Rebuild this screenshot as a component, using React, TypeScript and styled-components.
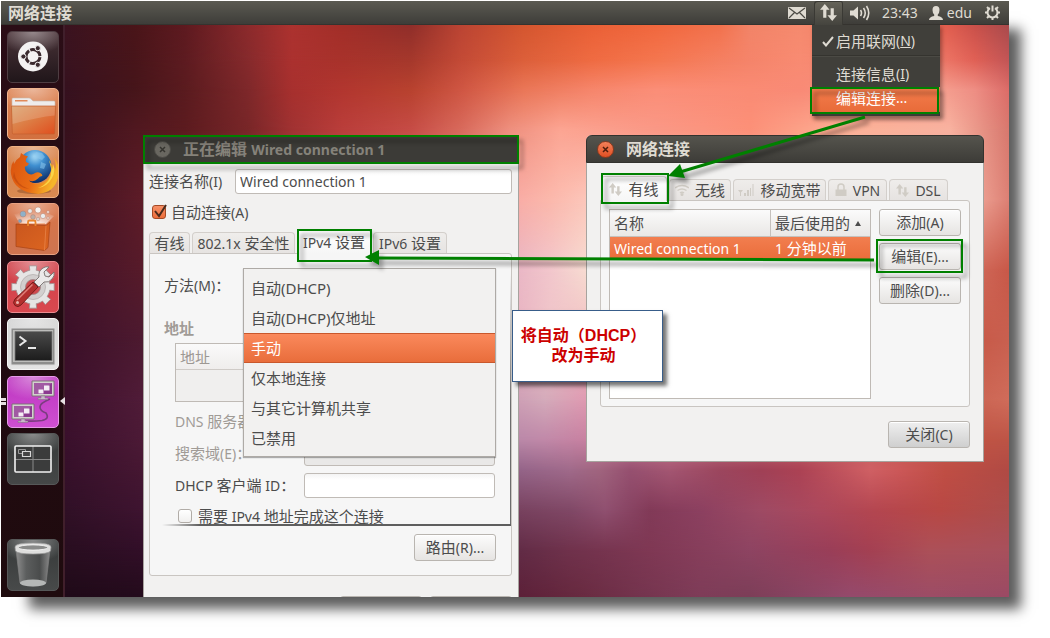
import React, { useState } from "react";
import styled, { createGlobalStyle, css } from "styled-components";

const LATIN = `"Noto Sans", "Open Sans", "Noto Sans CJK SC", sans-serif`;
const INK = "#4c4c4c";
const GREEN = "#008000";

const GlobalStyle = createGlobalStyle`
  * { box-sizing: border-box; }
  body {
    margin: 0;
    background: #fff;
    font: 15px/20px ${LATIN};
    color: ${INK};
  }
  button, input, select { font: inherit; color: inherit; }
`;

/* ---------- desktop shell ---------- */

const Page = styled.div`
  min-height: 100vh;
  padding: 1px 41px 41px 1px;
  display: flex;
`;

const Desktop = styled.main`
  flex: 1;
  display: flex;
  flex-direction: column;
  min-width: 0;
  box-shadow: 20px 20px 12px -8px rgba(0, 0, 0, 0.64);
`;

const Panel = styled.header`
  height: 24px;
  flex: none;
  display: flex;
  align-items: center;
  justify-content: space-between;
  padding: 0 2px 0 7px;
  color: #dfdbd2;
  background: linear-gradient(#5b5a52, #3e3d39);
  border-bottom: 1px solid #35332f;
`;

const AppTitle = styled.h1`
  margin: 0;
  font-size: 16px;
  line-height: 20px;
  font-weight: 700;
`;

const Tray = styled.div`
  display: flex;
  align-items: stretch;
  height: 24px;
`;

const TrayItem = styled.button<{ $open?: boolean; $pad?: number }>`
  border: 0;
  padding: 0 ${(p) => p.$pad ?? 6}px;
  display: flex;
  align-items: center;
  gap: 4px;
  background: none;
  font-size: 14px;
  ${(p) =>
    p.$open &&
    css`
      background: linear-gradient(#66645a, #45443e);
      box-shadow: inset 1px 1px 0 #3a3934, inset -1px 0 0 #3a3934;
      border-radius: 3px 3px 0 0;
    `}
  svg { display: block; }
`;

const Workspace = styled.div`
  flex: 1;
  display: flex;
  min-height: 0;
`;

const Launcher = styled.nav`
  flex: none;
  width: 64px;
  padding: 6px 6px;
  display: flex;
  flex-direction: column;
  justify-content: space-between;
  background: linear-gradient(#2b0d16, #210a11 50%, #1f0b0e);
  border-right: 2px solid #401f2b;
`;

const LauncherGroup = styled.div`
  height: 454px;
  display: flex;
  flex-direction: column;
  justify-content: space-between;
`;

const Tile = styled.button<{ $bg: string; $edge: string }>`
  position: relative;
  width: 52px;
  height: 52px;
  padding: 0;
  border: 1px solid ${(p) => p.$edge};
  border-radius: 5px;
  background: radial-gradient(ellipse 70% 45% at 50% 0, rgba(255, 255, 255, 0.42), rgba(255, 255, 255, 0)), ${(p) => p.$bg};
  > svg { display: block; width: 50px; height: 50px; }
`;

const Running = styled.span`
  position: absolute;
  left: -7px;
  top: 21px;
  width: 5px;
  height: 7px;
  border: solid #e6dfe2;
  border-width: 3px 0;
`;

const Focused = styled.span`
  position: absolute;
  right: -7px;
  top: 20px;
  border: 4px solid transparent;
  border-left-width: 0;
  border-right: 5px solid #e6dfe2;
`;

const Canvas = styled.div`
  position: relative;
  flex: 1;
  min-width: 0;
  overflow: hidden;
`;

const Backdrop = styled.svg`
  position: absolute;
  inset: 0;
  width: 100%;
  height: 100%;
`;

/* ---------- windows ---------- */

const Win = styled.section<{ $x: number; $y: number; $w: number }>`
  position: absolute;
  left: ${(p) => p.$x}px;
  top: ${(p) => p.$y}px;
  width: ${(p) => p.$w}px;
  background: #f2f1f0;
  border: 1px solid #a7a39e;
  border-top: 0;
  border-radius: 6px 6px 0 0;
`;

const TitleBar = styled.div<{ $active?: boolean }>`
  height: 28px;
  margin: 0 -1px;
  padding: 0 10px;
  display: flex;
  align-items: center;
  gap: 12px;
  border-radius: 6px 6px 0 0;
  border: 1px solid #33322e;
  background: ${(p) => (p.$active ? "linear-gradient(#55544d, #3d3c38)" : "#3c3b37")};
  color: ${(p) => (p.$active ? "#dfdbd2" : "#85827a")};
`;

const WinTitle = styled.h2`
  margin: 0;
  font-size: 16px;
  line-height: 20px;
  font-weight: 700;
`;

const Small = styled.span`
  font-size: 14px;
`;

const CloseDot = styled.button<{ $active?: boolean }>`
  width: 17px;
  height: 17px;
  padding: 0;
  border-radius: 50%;
  border: 1px solid ${(p) => (p.$active ? "#8c3a1e" : "#4b4a45")};
  background: ${(p) => (p.$active ? "linear-gradient(#f4815a, #df4f23)" : "#696760")};
  color: ${(p) => (p.$active ? "#4e1d0c" : "#35342f")};
  svg { display: block; margin: auto; }
`;

const TabStrip = styled.div<{ $indent?: number }>`
  display: flex;
  align-items: flex-end;
  gap: 2px;
  height: 24px;
  padding-left: ${(p) => p.$indent ?? 0}px;
`;

const Tab = styled.button<{ $on?: boolean; $w: number }>`
  width: ${(p) => p.$w}px;
  flex: none;
  height: ${(p) => (p.$on ? 25 : 21)}px;
  margin-bottom: ${(p) => (p.$on ? -1 : 0)}px;
  padding: 0;
  display: flex;
  align-items: center;
  justify-content: center;
  gap: 6px;
  white-space: nowrap;
  border: 1px solid #d3cfcb;
  border-bottom: 0;
  border-radius: 4px 4px 0 0;
  background: ${(p) => (p.$on ? "linear-gradient(#fff, #f6f6f6)" : "linear-gradient(#efedeb, #e6e3e1)")};
  svg { flex: none; }
`;

const Button = styled.button<{ $dark?: boolean }>`
  width: 82px;
  height: 27px;
  padding: 0;
  border: 1px solid #b9b5b0;
  border-radius: 3px;
  background: ${(p) => (p.$dark ? "linear-gradient(#efefef, #cfcfcf)" : "linear-gradient(#fcfcfc, #e6e4e2)")};
  box-shadow: inset 0 1px 0 #fff;
`;

const Field = styled.input`
  height: 25px;
  min-width: 0;
  padding: 0 4px;
  font-size: 14px;
  border: 1px solid #c0bbb6;
  border-radius: 3px;
  background: linear-gradient(#f4f4f4, #fff 6px);
  &:disabled { background: #e9e8e7; }
`;

const Check = styled.input`
  appearance: none;
  width: 14px;
  height: 14px;
  margin: 0;
  flex: none;
  border: 1px solid #b1aca7;
  border-radius: 3px;
  background: linear-gradient(#fff, #f1f0ef);
  &:checked {
    border-color: #a54a25;
    background: linear-gradient(#f68f66, #ec6e3b);
  }
`;

const CheckMark = styled.svg`
  position: absolute;
  left: 1px;
  top: 1px;
  pointer-events: none;
`;

const CheckRow = styled.label<{ $indent?: number; $gap?: number }>`
  position: relative;
  display: flex;
  align-items: center;
  height: 20px;
  margin-top: 8px;
  padding-left: ${(p) => p.$indent ?? 0}px;
  ${Check} { margin-right: ${(p) => p.$gap ?? 5}px; }
`;

const EditBody = styled.form`
  padding: 6px 6px 0 5px;
`;

const NameRow = styled.div`
  display: flex;
  align-items: center;
  label { width: 86px; }
  ${Field} { flex: 1; }
`;

const EditTabs = styled.div`
  margin-top: 7px;
`;

const TabPanel = styled.div`
  border: 1px solid #c9c5c1;
  border-radius: 0 3px 3px 3px;
  background: #f6f6f6;
`;

const Sheet = styled.div`
  position: relative;
  display: flex;
  flex-direction: column;
  height: 272px;
  padding: 21px 16px 0 14px;
  background:
    linear-gradient(to right, rgba(90, 90, 90, 0) 12px, #5e5e5e 50px) bottom / 100% 2px no-repeat,
    linear-gradient(rgba(90, 90, 90, 0) 20px, #6c6c6c 150px) right / 1px 100% no-repeat;
`;

const FormLabel = styled.label`
  height: 20px;
`;

const GroupTitle = styled.h3`
  margin: 23px 0 5px;
  font-size: 15px;
  line-height: 20px;
  font-weight: 700;
  color: #a09b96;
`;

const Addresses = styled.table`
  margin-left: 11px;
  height: 63px;
  border: 1px solid #bfbab5;
  border-spacing: 0;
  background: #f0efee;
  color: #9d9893;
  th {
    height: 26px;
    padding: 0 4px;
    text-align: left;
    font-weight: 400;
    background: linear-gradient(#fafafa, #efedec);
    border-bottom: 1px solid #cfcbc7;
  }
`;

const FieldRow = styled.div<{ $off?: boolean }>`
  margin: 7px 0 0 11px;
  display: flex;
  align-items: center;
  color: ${(p) => (p.$off ? "#a09b96" : INK)};
  label { width: 129px; white-space: nowrap; }
  ${Field} { flex: 1; }
`;

const MethodList = styled.select`
  position: absolute;
  left: 93px;
  top: 14px;
  width: 253px;
  height: 189px;
  padding: 4px 0;
  overflow: hidden;
  border: 1px solid #aeaaa6;
  border-radius: 0;
  outline: 0;
  background: #f2f1f0;
  box-shadow: 0 1px 1px rgba(0, 0, 0, 0.3);
  option {
    min-height: 30px;
    padding: 4px 7px 5px;
    color: ${INK};
  }
  option:checked {
    color: #fff;
    background: linear-gradient(#fb8a5d, #e86c3a);
    box-shadow: inset 0 1px 0 #c9582c, inset 0 -1px 0 #c9582c;
  }
`;

const RouteRow = styled.div`
  display: flex;
  justify-content: flex-end;
  padding: 8px 15px 14px;
`;

const Footer = styled.div`
  display: flex;
  justify-content: flex-end;
  gap: 8px;
  padding: 20px 0 9px;
`;

const ListBody = styled.div`
  padding: 13px 13px;
`;

const ListPanel = styled(TabPanel)`
  display: flex;
  gap: 8px;
  padding: 8px 8px 7px 8px;
`;

const ListFrame = styled.div`
  flex: 1;
  height: 190px;
  border: 1px solid #bfbab5;
  background: #fff;
`;

const Connections = styled.table`
  width: 100%;
  table-layout: fixed;
  border-spacing: 0;
  th, td {
    padding: 0 4px;
    text-align: left;
    font-weight: 400;
    white-space: nowrap;
  }
  th {
    height: 27px;
    background: linear-gradient(#fbfbfb, #e9e7e5);
    border-bottom: 1px solid #c5c1bd;
  }
  th + th { width: 100px; border-left: 1px solid #c5c1bd; }
  td {
    height: 22px;
    color: #fff;
    background: linear-gradient(#f27e4f, #ea6d3b);
  }
  td + td { padding-left: 5px; }
`;

const SortMark = styled.span`
  display: inline-block;
  margin: 0 0 3px 5px;
  border: 3px solid transparent;
  border-top: 0;
  border-bottom: 5px solid #4c4c4c;
`;

const Actions = styled.div`
  display: flex;
  flex-direction: column;
  gap: 7px;
`;

const CloseRow = styled.div`
  display: flex;
  justify-content: flex-end;
  padding-top: 14px;
`;

/* ---------- indicator menu, notes ---------- */

const Menu = styled.div`
  position: absolute;
  left: 747px;
  top: -1px;
  width: 128px;
  padding: 4px 0 4px;
  background: #403f3a;
  color: #dfdbd2;
  box-shadow: 2px 3px 4px rgba(0, 0, 0, 0.35);
`;

const MenuItem = styled.button<{ $hot?: boolean }>`
  width: 100%;
  height: ${(p) => (p.$hot ? 25 : 26)}px;
  padding: 0 0 ${(p) => (p.$hot ? 3 : 0)}px 7px;
  display: flex;
  align-items: center;
  border: 0;
  background: ${(p) => (p.$hot ? "linear-gradient(#f47d4d, #e86b39)" : "none")};
  color: ${(p) => (p.$hot ? "#fff" : "inherit")};
  white-space: nowrap;
`;

const MenuMark = styled.span`
  width: 17px;
  flex: none;
`;

const MenuRule = styled.hr`
  margin: 1px 0 4px;
  border: 0;
  border-top: 1px solid #35342f;
  border-bottom: 1px solid #4b4a44;
`;

const Note = styled.aside`
  position: absolute;
  left: 447px;
  top: 285px;
  width: 151px;
  height: 72px;
  padding: 15px 8px 0 0;
  border: 1px solid #385d8a;
  background: #fff;
  box-shadow: 4px 4px 4px rgba(0, 0, 0, 0.55);
  color: #cc0000;
  font: 700 16px/20px "Liberation Sans", "Noto Sans CJK SC", sans-serif;
  text-align: center;
  white-space: nowrap;
`;

const Marks = styled.svg`
  position: absolute;
  left: 0;
  top: 0;
  pointer-events: none;
  overflow: visible;
  filter: drop-shadow(4px 5px 2px rgba(0, 0, 0, 0.4));
`;

/* Mixed captions: Han characters at body size, Latin runs one step smaller. */
const Mixed = ({ text }: { text: string }) => (
  <span>
    {text.split(/([\x20-\x7e]+)/).map((part, i) => (i % 2 ? <Small key={i}>{part}</Small> : part))}
  </span>
);

/* ---------- wallpaper: rows of horizontal colour stops, blended downwards ---------- */

type Row = { y: number; stops: [number, string][] };

const ROWS: Row[] = [
  { y: 24, stops: [[65, "#3b1320"], [135, "#4a1519"], [185, "#5e1a20"], [248, "#8c2a2c"], [292, "#ac322f"], [342, "#a22e28"], [411, "#8f2e2a"], [461, "#bb4433"], [524, "#d4562f"], [593, "#ea6036"], [656, "#f1673d"], [720, "#f2714c"], [750, "#f28468"], [800, "#f58a6e"], [940, "#e8604e"], [975, "#c9504a"], [1009, "#a84a4c"]] },
  { y: 60, stops: [[65, "#39131f"], [135, "#48151a"], [185, "#5d1b20"], [248, "#862a2c"], [292, "#ab312f"], [342, "#a8322b"], [411, "#a5382c"], [461, "#c34a36"], [524, "#dc5f3a"], [593, "#ef6b42"], [656, "#f4764f"], [750, "#f5846a"], [800, "#f88b72"], [940, "#ee7868"], [975, "#e06055"], [1009, "#c25556"]] },
  { y: 90, stops: [[65, "#36111f"], [135, "#46151a"], [185, "#5a1b1f"], [248, "#7e282a"], [292, "#a7302e"], [342, "#b2362f"], [411, "#b8422f"], [461, "#cf5643"], [524, "#ea7758"], [593, "#f6866c"], [656, "#fb8e78"], [750, "#fa8b74"], [800, "#f98a76"], [940, "#f6a090"], [975, "#ee8e84"], [1009, "#dc6c68"]] },
  { y: 130, stops: [[65, "#38111d"], [135, "#501820"], [185, "#5c1b1f"], [248, "#782628"], [292, "#a03232"], [342, "#ba3e3b"], [411, "#c64c46"], [461, "#d86a5c"], [510, "#ee907f"], [560, "#fca593"], [656, "#fa9886"], [750, "#fc9078"], [850, "#fcb298"], [950, "#f8b2a0"], [1009, "#d8786e"]] },
  { y: 200, stops: [[65, "#3c1220"], [143, "#5e1c28"], [510, "#f8aaa4"], [550, "#fbb8ac"], [590, "#fcc8bc"], [980, "#eda092"], [1009, "#dc8074"]] },
  { y: 270, stops: [[65, "#401228"], [143, "#571b2a"], [510, "#e8b4c4"], [550, "#f2c6cc"], [590, "#f8ded2"], [980, "#d06858"], [1009, "#c85848"]] },
  { y: 340, stops: [[65, "#3b1028"], [143, "#4d1a30"], [510, "#e8b0c0"], [550, "#eec4c8"], [590, "#f0bcc0"], [980, "#c85a48"], [1009, "#c86050"]] },
  { y: 400, stops: [[65, "#3c102c"], [143, "#501c38"], [510, "#cc9cb4"], [545, "#d4aaba"], [590, "#e098b0"], [980, "#cc6654"], [1009, "#d06c5a"]] },
  { y: 440, stops: [[65, "#3a102c"], [143, "#4c1a36"], [510, "#b888a8"], [545, "#c088a8"], [590, "#c880a0"], [980, "#c05444"], [1009, "#bc5446"]] },
  { y: 470, stops: [[65, "#36102a"], [143, "#461732"], [520, "#946488"], [570, "#a06a8a"], [600, "#a0647e"], [630, "#965070"], [670, "#a45672"], [720, "#9c465e"], [760, "#a04056"], [800, "#ac4254"], [870, "#d06064"], [900, "#cc5858"], [945, "#c04e44"], [1009, "#b04a44"]] },
  { y: 510, stops: [[65, "#301026"], [143, "#3e1430"], [520, "#78425f"], [570, "#804866"], [605, "#905070"], [650, "#823a58"], [700, "#8c4060"], [760, "#9e4a64"], [820, "#ac485c"], [875, "#b44650"], [940, "#b84844"], [1009, "#ac4e4c"]] },
  { y: 550, stops: [[65, "#290e20"], [143, "#320f28"], [520, "#622c46"], [570, "#70324c"], [650, "#7f3854"], [750, "#8e4462"], [830, "#9a3e58"], [870, "#a44052"], [930, "#ac5058"], [1009, "#a8505c"]] },
  { y: 597, stops: [[65, "#1f0a18"], [143, "#240b1c"], [520, "#5c2038"], [580, "#682a40"], [640, "#74344e"], [700, "#7e3c58"], [750, "#7c3e58"], [850, "#944a6c"], [930, "#9c4c66"], [1009, "#9a4a64"]] },
];

const Wallpaper = () => (
  <Backdrop viewBox="65 25 944 572" preserveAspectRatio="none" aria-hidden="true">
    <defs>
      <linearGradient id="fade" x1="0" y1="0" x2="0" y2="1">
        <stop offset="0" stopColor="#000" />
        <stop offset="1" stopColor="#fff" />
      </linearGradient>
      <mask id="down" maskContentUnits="objectBoundingBox" x="0" y="0" width="1" height="1">
        <rect width="1" height="1" fill="url(#fade)" />
      </mask>
      {ROWS.map((r, i) => (
        <linearGradient key={i} id={`row${i}`} gradientUnits="userSpaceOnUse" x1="65" y1="0" x2="1009" y2="0">
          {r.stops.map(([x, c]) => (
            <stop key={x} offset={(x - 65) / 944} stopColor={c} />
          ))}
        </linearGradient>
      ))}
    </defs>
    {ROWS.slice(0, -1).map((r, i) => {
      const h = ROWS[i + 1].y - r.y;
      return (
        <g key={i} shapeRendering="crispEdges">
          <rect x="65" y={r.y} width="944" height={h} fill={`url(#row${i})`} />
          <rect x="65" y={r.y} width="944" height={h} fill={`url(#row${i + 1})`} mask="url(#down)" />
        </g>
      );
    })}
  </Backdrop>
);

/* ---------- launcher drawings ---------- */

const DashIcon = () => (
  <svg viewBox="0 0 50 50">
    <circle cx="25" cy="24.5" r="15" fill="#f4f2f2" />
    <circle cx="25" cy="24.5" r="7" fill="none" stroke="#3b2a2e" strokeWidth="3" strokeDasharray="13.4 1.26" strokeDashoffset="-.63" />
    {[180, 300, 60].map((a) => (
      <circle key={a} cx={25 + 9.6 * Math.cos((a * Math.PI) / 180)} cy={24.5 + 9.6 * Math.sin((a * Math.PI) / 180)} r="2.6" fill="#3b2a2e" stroke="#f4f2f2" strokeWidth="1" />
    ))}
  </svg>
);

const FolderIcon = () => (
  <svg viewBox="0 0 50 50">
    <defs>
      <linearGradient id="fold" x1="0" y1="0" x2="1" y2="1">
        <stop offset="0" stopColor="#d9a06a" />
        <stop offset=".5" stopColor="#dd7a42" />
        <stop offset="1" stopColor="#e04e1e" />
      </linearGradient>
    </defs>
    <path d="M4 10q0-1 1-1h16q1 0 2 1l2 2h21q1 0 1 1v6H4z" fill="#eeeceb" stroke="#c8b8ac" strokeWidth=".6" />
    <path d="M7 11h12.500v1.500H7z" fill="#e08a5a" />
    <path d="M3.500 17h44l-.8 27q0 1-1 1H5.300q-1 0-1-1z" fill="url(#fold)" stroke="#c4602e" strokeWidth=".7" />
    <path d="M4 17.500h43l-.3 9Q30 28 4.500 35z" fill="#fff" opacity=".16" />
  </svg>
);

const FirefoxIcon = () => (
  <svg viewBox="0 0 50 50">
    <defs>
      <radialGradient id="globe" cx=".5" cy=".2" r=".8">
        <stop offset="0" stopColor="#a8dcf6" />
        <stop offset=".35" stopColor="#3f8fd0" />
        <stop offset="1" stopColor="#0b2a66" />
      </radialGradient>
      <linearGradient id="fox" x1="0" y1="0" x2="1" y2=".3">
        <stop offset="0" stopColor="#d9520f" />
        <stop offset=".6" stopColor="#e96c14" />
        <stop offset="1" stopColor="#f6b52a" />
      </linearGradient>
    </defs>
    <ellipse cx="26" cy="44" rx="17" ry="3" fill="#6b3010" opacity=".35" />
    <circle cx="27" cy="19.500" r="16.500" fill="url(#globe)" />
    <path d="M28 5l6 1 3 4-3 3-5-2-4 1zM33 15l5 2-2 5-4-1z" fill="#8cc8ee" opacity=".55" />
    <path d="M12 10l1-4q3 3 7 3.500Q17 12 18 15l3 1.500q-1 2.500-4 3-1 4 3 7 4 2 7-.5 3-1.500 6 .500 2 1.500 1 2.500-2.500 0-4 2.500-4 4-9 2 4 4 11 3 9-2 11-12 1-4-.5-8 4 2 4.500 7 2-5-1-13 6 7 4.500 18-3 17-20 18.500Q6 45.500 3 27q-1-8 2.500-13l.5 3q2.500-5 6-7z" fill="url(#fox)" />
    <path d="M41 13q3 5 2.500 11 2-4 1.500-7 3 7-1 14-5 9-14 10 15-6 13-20-1-4-2-8z" fill="#fbd546" />
    <path d="M6 25q2 13 15 17-11-1-16-12z" fill="#b8430e" opacity=".55" />
  </svg>
);

const SoftwareIcon = () => (
  <svg viewBox="0 0 50 50">
    <defs>
      <linearGradient id="bag" x1="0" y1="0" x2="1" y2="1">
        <stop offset="0" stopColor="#c9561e" />
        <stop offset="1" stopColor="#dc6520" />
      </linearGradient>
      <radialGradient id="glow" cx=".5" cy="1" r=".9">
        <stop offset="0" stopColor="#fff" />
        <stop offset="1" stopColor="#fff" stopOpacity="0" />
      </radialGradient>
    </defs>
    <path d="M6 10L12 20H38L46 12 33 6 20 7z" fill="url(#glow)" />
    <g stroke="#b97d68" strokeWidth=".5">
      <circle cx="15" cy="10" r="3" fill="#8fb0c8" />
      <circle cx="22" cy="7" r="2.300" fill="#e8e8e8" />
      <circle cx="30" cy="6" r="3" fill="#f6f4f2" />
      <circle cx="35" cy="12" r="2.600" fill="#e9eef0" />
      <circle cx="25" cy="13" r="2.400" fill="#b9aea8" />
      <circle cx="12" cy="17" r="1.800" fill="#7fa0bc" />
      <circle cx="40" cy="8" r="1.500" fill="#f0ddd4" />
      <circle cx="40" cy="14" r="1.300" fill="#f0ddd4" />
      <circle cx="30" cy="15" r="1.800" fill="#d8d0cc" />
    </g>
    <path d="M8 20l30 1.500 4-3.500-2 25.500-3.500 3L8 42.500z" fill="url(#bag)" stroke="#a84214" strokeWidth=".7" />
    <path d="M38 21.500l-1.500 25M12 19.500h25" stroke="#f0935a" strokeWidth=".8" opacity=".7" />
    <path d="M20 22v-4q0-1.500 1.500-1.500h4.500q1.500 0 1.500 1.500v4" fill="none" stroke="#e8862e" strokeWidth="1.800" />
  </svg>
);

const gearPath = (n: number, cx: number, cy: number, r1: number, r2: number) => {
  const pts: string[] = [];
  for (let i = 0; i < n; i++) {
    const a = (i * 360) / n;
    for (const [d, r] of [[-17, r1], [-11, r1], [-10, r2], [10, r2], [11, r1], [17, r1]] as const) {
      const t = ((a + d) * Math.PI) / 180;
      pts.push(`${(cx + r * Math.cos(t)).toFixed(1)} ${(cy + r * Math.sin(t)).toFixed(1)}`);
    }
  }
  return `M${pts.join("L")}Z`;
};

const SettingsIcon = () => (
  <svg viewBox="0 0 50 50">
    <path d={gearPath(8, 25, 25, 17, 21.5)} fill="#e6e5e4" stroke="#a08f8f" strokeWidth=".8" />
    <circle cx="25" cy="25" r="12.500" fill="#d2cfce" stroke="#b5b0ae" strokeWidth=".8" />
    <circle cx="25" cy="25" r="7.500" fill="#cf4a4e" stroke="#9a8a8a" strokeWidth=".8" />
    <path d="M26 20l5-5q-1-6 4-9 3-2 6-1l-5 5 1 4 4 1 5-5q1 4-2 7-3 4-8 3l-5 5z" fill="#eceae9" stroke="#77706e" strokeWidth=".9" />
    <path d="M25 20l5 5L13 43q-3 3-6 .5T7 37z" fill="#b3302e" stroke="#701a18" strokeWidth=".9" />
    <path d="M24.500 22.500L9 38" stroke="#e0807a" strokeWidth="1.400" />
    <circle cx="9.500" cy="40.500" r="1.500" fill="#e8b4ac" />
  </svg>
);

const TerminalIcon = () => (
  <svg viewBox="0 0 50 50">
    <defs>
      <linearGradient id="term" x1="0" y1="0" x2="0" y2="1">
        <stop offset="0" stopColor="#4a4a4a" />
        <stop offset="1" stopColor="#1c1c1c" />
      </linearGradient>
    </defs>
    <path d="M3 9h44v37H3z" fill="#8d8d8c" stroke="#dcdcdc" strokeWidth="1" />
    <path d="M5 11h40v32H5z" fill="#bdbdbb" />
    <path d="M7 12.500h37v29H7z" fill="url(#term)" stroke="#777" strokeWidth=".8" />
    <path d="M11.500 17.500l6 4.500-6 4.500" fill="none" stroke="#e8e8e8" strokeWidth="2" />
    <path d="M20 29h8" stroke="#e8e8e8" strokeWidth="2" />
  </svg>
);

const Monitor = ({ x, y }: { x: number; y: number }) => (
  <g transform={`translate(${x} ${y})`}>
    <path d="M0 0h22v15H0z" fill="#d4d0cf" stroke="#77716f" strokeWidth=".9" />
    <path d="M2 2h18v11H2z" fill="#8a3a8e" />
    <path d="M2 2h18L6 13H2z" fill="#b070b0" opacity=".6" />
    <path d="M12 4.500h5.500v5H12zM6.500 8.500h5v4h-5z" fill="#fff" opacity=".9" />
    <path d="M9 15h4v2h3v1.500H6V17h3z" fill="#c8b8c8" stroke="#7d6a7d" strokeWidth=".5" />
  </g>
);

const NetworkIcon = () => (
  <svg viewBox="0 0 50 50">
    <path d="M42 22q-10 4-10 8t6 6q4 6-4 7.500-8 1-16 .5" fill="none" stroke="#7b3d80" strokeWidth="1.600" />
    <Monitor x={24} y={4} />
    <Monitor x={4} y={27} />
  </svg>
);

const WorkspacesIcon = () => (
  <svg viewBox="0 0 50 50">
    <path d="M7 12h36v26H7z" fill="#3b3c3c" />
    <path d="M25 12v26M7 25.500h36" stroke="#8a8a8a" strokeWidth="1" />
    <rect x="7" y="12" width="36" height="26" rx="1" fill="none" stroke="#f2f2f2" strokeWidth="1.600" />
    <path d="M10.500 15.500h7v4h-7z" fill="none" stroke="#999" strokeWidth="1" />
    <path d="M14.500 17.500h8v5h-8z" fill="#444" stroke="#d8d8d8" strokeWidth="1.200" />
  </svg>
);

const TrashIcon = () => (
  <svg viewBox="0 0 50 50">
    <defs>
      <linearGradient id="can" x1="0" y1="0" x2="1" y2="0">
        <stop offset="0" stopColor="#8e8e8e" />
        <stop offset=".3" stopColor="#5c5e5e" />
        <stop offset=".7" stopColor="#4a4c4c" />
        <stop offset="1" stopColor="#8a8a8a" />
      </linearGradient>
    </defs>
    <path d="M8 10l4 33q13 6 26 0l4-33z" fill="url(#can)" stroke="#808080" strokeWidth=".7" />
    <ellipse cx="25" cy="43" rx="13" ry="3.500" fill="#b5b7b6" />
    <path d="M7 7q0-4 18-4t18 4l-.5 4Q40 14 25 14T7.500 11z" fill="#dededd" stroke="#9b9b9b" strokeWidth=".7" />
    <ellipse cx="25" cy="7.500" rx="15" ry="2.600" fill="#8a8b8a" stroke="#f8f8f8" strokeWidth=".8" />
  </svg>
);

const TILES = [
  { name: "Dash", bg: "linear-gradient(#4a3338, #20161a)", edge: "#4e3d42", icon: <DashIcon /> },
  { name: "Home Folder", bg: "linear-gradient(#dd8454, #d2703f)", edge: "#f0b48e", icon: <FolderIcon /> },
  { name: "Firefox", bg: "linear-gradient(#d8834c, #d98a52)", edge: "#eeb184", icon: <FirefoxIcon /> },
  { name: "Software Center", bg: "linear-gradient(#d87448, #cf7450)", edge: "#e8a181", icon: <SoftwareIcon /> },
  { name: "System Settings", bg: "linear-gradient(#cf4149, #d9484f)", edge: "#ec8a90", icon: <SettingsIcon /> },
  { name: "Terminal", bg: "linear-gradient(#d2d2d2, #e4e4e4)", edge: "#f5f5f5", icon: <TerminalIcon /> },
  { name: "Network Connections", bg: "linear-gradient(#bd35c0, #cf4fd2)", edge: "#e69ae8", icon: <NetworkIcon />, running: true },
  { name: "Workspaces", bg: "linear-gradient(#363939, #454747)", edge: "#565858", icon: <WorkspacesIcon /> },
];

/* ---------- small glyphs ---------- */

const Arrows = ({ size = 16, fill = "#dfdbd2" }: { size?: number; fill?: string }) => (
  <svg width={size} height={size} viewBox="0 0 16 16" fill={fill} aria-hidden="true">
    <path d="M4.500 0L9 5.500H6V13H3V5.500H0zM11.500 16L7 10.500h3V4h3v6.500h3z" />
  </svg>
);

const Cross = () => (
  <svg width="7" height="7" viewBox="0 0 7 7" aria-hidden="true">
    <path d="M1 1l5 5M6 1L1 6" stroke="currentColor" strokeWidth="1.500" />
  </svg>
);

const PALE = "#d0ccc5";

const WifiGlyph = () => (
  <svg width="14" height="14" viewBox="0 0 14 14" fill="none" stroke={PALE} strokeWidth="1.500" aria-hidden="true">
    <path d="M0 5q7-5 14 0M2.500 7.500q4.500-3.200 9 0M5 10q2-1.500 4 0" />
    <circle cx="7" cy="11.500" r=".8" fill={PALE} />
  </svg>
);

const BarsGlyph = () => (
  <svg width="16" height="14" viewBox="0 0 16 14" fill={PALE} aria-hidden="true">
    <path d="M0 7h5L3 9.500V13H2V9.500zM6 10h2v3H6zM9 7h2v6H9zM12 5h1v8h-1zM14.500 1h1v12h-1z" />
  </svg>
);

const LockGlyph = () => (
  <svg width="12" height="14" viewBox="0 0 12 14" aria-hidden="true">
    <path d="M3 7V4q0-3 3-3t3 3v3" fill="none" stroke={PALE} strokeWidth="1.500" />
    <path d="M.5 6.500h11V13H.5z" fill={PALE} />
  </svg>
);

/* ---------- parts ---------- */

const EditWindow = () => {
  const [method, setMethod] = useState("manual");
  return (
    <Win $x={78} $y={110} $w={376} aria-label="Wired connection 1">
      <TitleBar>
        <CloseDot type="button" aria-label="Close"><Cross /></CloseDot>
        <WinTitle>正在编辑 <Small>Wired connection 1</Small></WinTitle>
      </TitleBar>
      <EditBody>
        <NameRow>
          <label htmlFor="conn-name"><Mixed text="连接名称(I)" /></label>
          <Field id="conn-name" defaultValue="Wired connection 1" />
        </NameRow>
        <CheckRow $indent={3}>
          <Check type="checkbox" defaultChecked />
          <CheckMark width="20" height="18" viewBox="0 0 20 18">
            <path d="M5 8l4 5 7-11" fill="none" stroke="#4a2a1c" strokeWidth="2" />
          </CheckMark>
          <Mixed text="自动连接(A)" />
        </CheckRow>
        <EditTabs>
          <TabStrip role="tablist">
            <Tab type="button" role="tab" $w={41}>有线</Tab>
            <Tab type="button" role="tab" $w={103}><Mixed text="802.1x 安全性" /></Tab>
            <Tab type="button" role="tab" $on $w={74}><Mixed text="IPv4 设置" /></Tab>
            <Tab type="button" role="tab" $w={74}><Mixed text="IPv6 设置" /></Tab>
          </TabStrip>
        </EditTabs>
        <TabPanel>
          <Sheet>
            <FormLabel htmlFor="method"><Mixed text="方法(M)：" /></FormLabel>
            <GroupTitle>地址</GroupTitle>
            <Addresses>
              <thead><tr><th>地址</th></tr></thead>
              <tbody><tr><td /></tr></tbody>
            </Addresses>
            <FieldRow $off>
              <label htmlFor="dns"><Mixed text="DNS 服务器：" /></label>
              <Field id="dns" disabled />
            </FieldRow>
            <FieldRow $off>
              <label htmlFor="domains"><Mixed text="搜索域(E)：" /></label>
              <Field id="domains" disabled />
            </FieldRow>
            <FieldRow>
              <label htmlFor="client"><Mixed text="DHCP 客户端 ID：" /></label>
              <Field id="client" />
            </FieldRow>
            <CheckRow $indent={14} $gap={6}>
              <Check type="checkbox" />
              <Mixed text="需要 IPv4 地址完成这个连接" />
            </CheckRow>
            <MethodList id="method" size={6} value={method} onChange={(e) => setMethod(e.target.value)}>
              <option value="auto">自动(DHCP)</option>
              <option value="auto-addr">自动(DHCP)仅地址</option>
              <option value="manual">手动</option>
              <option value="link-local">仅本地连接</option>
              <option value="shared">与其它计算机共享</option>
              <option value="disabled">已禁用</option>
            </MethodList>
          </Sheet>
          <RouteRow>
            <Button type="button"><Mixed text="路由(R)..." /></Button>
          </RouteRow>
        </TabPanel>
        <Footer>
          <Button type="button" aria-label="Cancel" />
          <Button type="button" aria-label="Save" />
        </Footer>
      </EditBody>
    </Win>
  );
};

const ListWindow = () => (
  <Win $x={521} $y={110} $w={398} aria-label="网络连接">
    <TitleBar $active>
      <CloseDot type="button" $active aria-label="Close"><Cross /></CloseDot>
      <WinTitle>网络连接</WinTitle>
    </TitleBar>
    <ListBody>
      <TabStrip role="tablist" $indent={1}>
        <Tab type="button" role="tab" $on $w={66}><Arrows size={13} fill={PALE} />有线</Tab>
        <Tab type="button" role="tab" $w={62}><WifiGlyph />无线</Tab>
        <Tab type="button" role="tab" $w={93}><BarsGlyph />移动宽带</Tab>
        <Tab type="button" role="tab" $w={59}><LockGlyph /><Mixed text="VPN" /></Tab>
        <Tab type="button" role="tab" $w={59}><Arrows size={13} fill={PALE} /><Mixed text="DSL" /></Tab>
      </TabStrip>
      <ListPanel>
        <ListFrame>
          <Connections>
            <thead>
              <tr><th>名称</th><th>最后使用的<SortMark /></th></tr>
            </thead>
            <tbody>
              <tr><td><Mixed text="Wired connection 1" /></td><td><Mixed text="1 分钟以前" /></td></tr>
            </tbody>
          </Connections>
        </ListFrame>
        <Actions>
          <Button type="button"><Mixed text="添加(A)" /></Button>
          <Button type="button"><Mixed text="编辑(E)..." /></Button>
          <Button type="button"><Mixed text="删除(D)..." /></Button>
        </Actions>
      </ListPanel>
      <CloseRow>
        <Button type="button" $dark><Mixed text="关闭(C)" /></Button>
      </CloseRow>
    </ListBody>
  </Win>
);

const IndicatorMenu = () => (
  <Menu role="menu">
    <MenuItem role="menuitem">
      <MenuMark>
        <svg width="12" height="11" viewBox="0 0 12 11"><path d="M1 6l3 3.500L11 1" fill="none" stroke="#dfdbd2" strokeWidth="2" /></svg>
      </MenuMark>
      启用联网<Small>(<u>N</u>)</Small>
    </MenuItem>
    <MenuRule />
    <MenuItem role="menuitem"><MenuMark />连接信息<Small>(<u>I</u>)</Small></MenuItem>
    <MenuItem role="menuitem" $hot><MenuMark />编辑连接<Small>...</Small></MenuItem>
  </Menu>
);

const Annotations = () => (
  <Marks width="944" height="572" viewBox="65 25 944 572" aria-hidden="true">
    <g fill="none" stroke={GREEN} strokeWidth="2">
      <rect x="144" y="136" width="374" height="27" />
      <rect x="298" y="230" width="73" height="31" />
      <rect x="602" y="174" width="66" height="29" />
      <rect x="877" y="240" width="85" height="32" />
      <rect x="811" y="88" width="127" height="25" />
      <path d="M865 117L680 172" strokeWidth="3" />
      <path d="M874 260L376 258" strokeWidth="3" />
    </g>
    <path d="M668 176l12-12 5 14z" fill={GREEN} />
    <path d="M365 257l14-7v15z" fill={GREEN} />
  </Marks>
);

export default function App() {
  return (
    <Page>
      <GlobalStyle />
      <Desktop>
        <Panel>
          <AppTitle>网络连接</AppTitle>
          <Tray>
            <TrayItem aria-label="Messages" $pad={8}>
              <svg width="18" height="12" viewBox="0 0 18 12">
                <rect width="18" height="12" rx="1" fill="#dfdbd2" />
                <path d="M1 1l8 6 8-6M1 11l5.500-5.500M17 11l-5.500-5.500" fill="none" stroke="#4b4a44" strokeWidth="1.200" />
              </svg>
            </TrayItem>
            <TrayItem aria-label="Network" $open><Arrows size={17} /></TrayItem>
            <TrayItem aria-label="Sound" $pad={7}>
              <svg width="20" height="16" viewBox="0 0 20 16" fill="none" stroke="#dfdbd2" strokeWidth="1.600">
                <path d="M0 5.500h3.500L8 1.500v13l-4.500-4H0z" fill="#dfdbd2" stroke="none" />
                <path d="M10.500 5q2 3 0 6M13.500 3q3.500 5 0 10M16.500 1q4.500 7 0 14" />
              </svg>
            </TrayItem>
            <TrayItem $pad={5}>23:43</TrayItem>
            <TrayItem>
              <svg width="14" height="14" viewBox="0 0 14 14" fill="#dfdbd2">
                <path d="M7 0q3.500 0 3.500 4Q10.500 7 8.800 8.500V10q5 .8 5.200 4H0q.2-3.200 5.200-4V8.500Q3.500 7 3.500 4 3.500 0 7 0z" />
              </svg>
              edu
            </TrayItem>
            <TrayItem aria-label="Session">
              <svg width="17" height="17" viewBox="0 0 17 17" fill="none" stroke="#dfdbd2">
                <path d="M6 4.200a5 5 0 1 0 5 0" strokeWidth="2" />
                <path d="M8.500 1.500v6" strokeWidth="2" />
                <path d="M1 8.500h2.500M13.500 8.500H16M8.500 13.500V16M3 3l2 2M14 3l-2 2M3 14l2-2M14 14l-2-2" strokeWidth="2" />
              </svg>
            </TrayItem>
          </Tray>
        </Panel>
        <Workspace>
          <Launcher>
            <LauncherGroup>
              {TILES.map((t) => (
                <Tile key={t.name} $bg={t.bg} $edge={t.edge} aria-label={t.name}>
                  {t.icon}
                  {t.running && <><Running /><Focused /></>}
                </Tile>
              ))}
            </LauncherGroup>
            <Tile $bg="linear-gradient(#353838, #484a4a)" $edge="#565858" aria-label="Trash"><TrashIcon /></Tile>
          </Launcher>
          <Canvas>
            <Wallpaper />
            <EditWindow />
            <ListWindow />
            <IndicatorMenu />
            <Annotations />
            <Note>将自动（DHCP）<br />改为手动</Note>
          </Canvas>
        </Workspace>
      </Desktop>
    </Page>
  );
}
